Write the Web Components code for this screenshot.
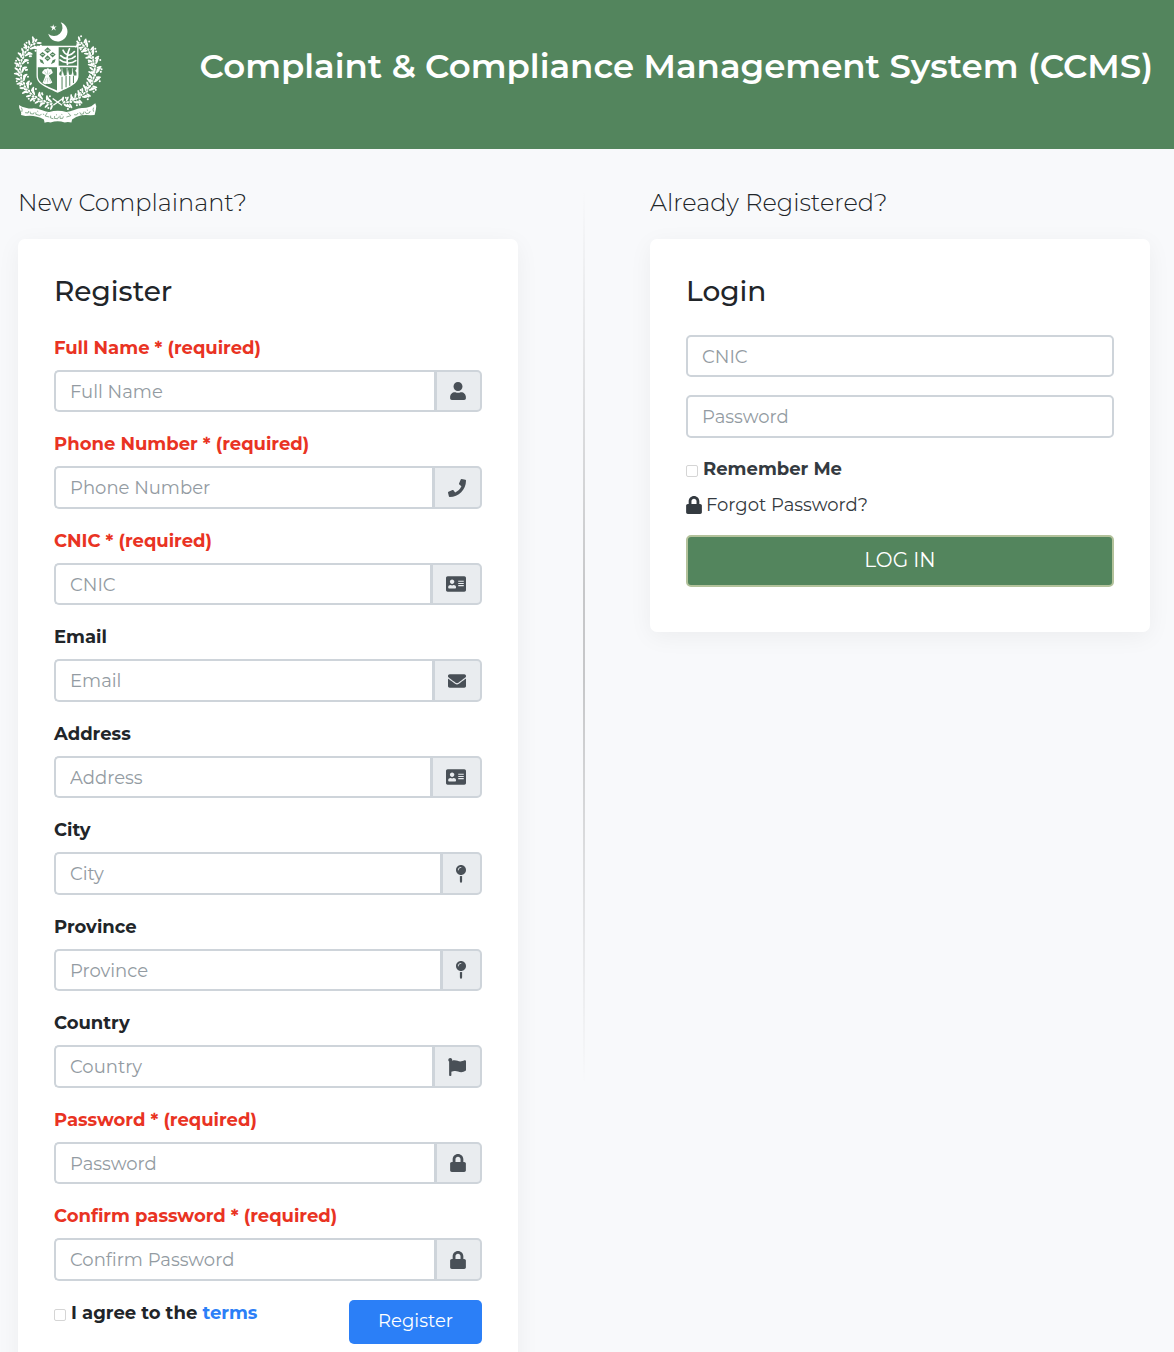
<!DOCTYPE html>
<html lang="en">
<head>
<meta charset="utf-8">
<meta name="viewport" content="width=device-width, initial-scale=1">
<title>Complaint &amp; Compliance Management System (CCMS)</title>
<style>
  :root {
    --green: #53855d;
    --ink: #212529;
    --soft-ink: #343a40;
    --line: #ced4da;
    --addon: #e9ecef;
    --hint: #939ba2;
    --blue: #2b7ff7;
    --red: #e93323;
    --font: Montserrat, Inter, "Open Sans", sans-serif;
  }
  body { margin: 0; background: #f8f9fb; color: var(--ink); font: 400 18px/1.5 var(--font); }
</style>
</head>
<body>
<ccms-page></ccms-page>

<script>
const define = (name, html, setup) => {
  const template = document.createElement('template');
  template.innerHTML = '<style>*{box-sizing:border-box}</style>' + html;
  customElements.define(name, class extends HTMLElement {
    connectedCallback() {
      if (this.shadowRoot) return;
      const root = this.attachShadow({ mode: 'open' });
      root.append(template.content.cloneNode(true));
      if (setup) setup(this, root);
    }
  });
};

/* glyph: [viewBox width, drawn width in px, path] */
const ICONS = {
  user: [448, 16, 'M224 256c70.7 0 128-57.3 128-128S294.7 0 224 0 96 57.3 96 128s57.3 128 128 128zm89.6 32h-16.7c-22.2 10.2-46.9 16-72.9 16s-50.6-5.8-72.9-16h-16.7C60.2 288 0 348.2 0 422.4V464c0 26.5 21.5 48 48 48h352c26.5 0 48-21.5 48-48v-41.6c0-74.2-60.2-134.4-134.4-134.4z'],
  phone: [512, 18, 'M493.4 24.6l-104-24c-11.3-2.6-22.9 3.3-27.5 13.9l-48 112c-4.2 9.8-1.4 21.3 6.9 28l60.6 49.6c-36 76.7-98.9 140.5-177.2 177.2l-49.6-60.6c-6.8-8.3-18.2-11.1-28-6.9l-112 48C3.9 366.5-2 378.1.6 389.4l24 104C27.1 504.2 36.7 512 48 512c256.1 0 464-207.5 464-464 0-11.2-7.7-20.9-18.6-23.4z'],
  card: [576, 20, 'M528 32H48C21.5 32 0 53.5 0 80v352c0 26.5 21.5 48 48 48h480c26.5 0 48-21.5 48-48V80c0-26.5-21.5-48-48-48zm-352 96c35.3 0 64 28.7 64 64s-28.7 64-64 64-64-28.7-64-64 28.7-64 64-64zm112 236.8c0 10.6-10 19.2-22.4 19.2H86.4C74 384 64 375.4 64 364.8v-19.2c0-31.8 30.1-57.6 67.2-57.6h5c12.3 5.1 25.7 8 39.8 8s27.6-2.9 39.8-8h5c37.1 0 67.2 25.8 67.2 57.6v19.2zM512 312c0 4.4-3.6 8-8 8H360c-4.4 0-8-3.6-8-8v-16c0-4.4 3.6-8 8-8h144c4.4 0 8 3.6 8 8v16zm0-64c0 4.4-3.6 8-8 8H360c-4.4 0-8-3.6-8-8v-16c0-4.4 3.6-8 8-8h144c4.4 0 8 3.6 8 8v16zm0-64c0 4.4-3.6 8-8 8H360c-4.4 0-8-3.6-8-8v-16c0-4.4 3.6-8 8-8h144c4.4 0 8 3.6 8 8v16z'],
  mail: [512, 18, 'M502.3 190.8c3.9-3.1 9.7-.2 9.7 4.7V400c0 26.5-21.5 48-48 48H48c-26.5 0-48-21.5-48-48V195.6c0-5 5.7-7.8 9.7-4.7 22.4 17.4 52.1 39.5 154.1 113.6 21.1 15.4 56.7 47.8 92.2 47.6 35.7.3 72-32.8 92.3-47.6 102-74.1 131.6-96.3 154-113.7zM256 320c23.2.4 56.6-29.2 73.4-41.4 132.7-96.3 142.8-104.7 173.4-128.7 5.8-4.5 9.2-11.5 9.2-18.9v-19c0-26.5-21.5-48-48-48H48c-26.5 0-48 21.5-48 48v19c0 7.4 3.4 14.3 9.2 18.9 30.6 23.9 40.7 32.4 173.4 128.7 16.8 12.2 50.2 41.8 73.4 41.4z'],
  pin: [288, 10, 'M112 316.94v156.69l22.02 33.02c4.75 7.12 15.22 7.12 19.97 0L176 473.63V316.94c-10.39 1.92-21.06 3.06-32 3.06s-21.61-1.14-32-3.06zM144 0C64.47 0 0 64.47 0 144s64.47 144 144 144 144-64.47 144-144S223.53 0 144 0zm0 76c-37.5 0-68 30.5-68 68 0 6.62-5.38 12-12 12s-12-5.38-12-12c0-50.73 41.28-92 92-92 6.62 0 12 5.38 12 12s-5.38 12-12 12z'],
  flag: [512, 18, 'M349.565 98.783C295.978 98.783 251.721 64 184.348 64c-24.955 0-47.309 4.384-68.045 12.013a55.947 55.947 0 0 0 3.586-23.562C118.117 24.015 94.806 1.206 66.338.048 34.345-1.254 8 24.296 8 56c0 19.026 9.497 35.825 24 45.945V488c0 13.255 10.745 24 24 24h16c13.255 0 24-10.745 24-24v-94.4c28.311-12.064 63.582-22.122 114.435-22.122 53.588 0 97.844 34.783 165.217 34.783 48.169 0 86.667-16.294 122.505-40.858C506.84 359.452 512 349.571 512 339.045v-243.1c0-23.393-24.269-38.87-45.485-29.016-34.338 15.948-76.454 31.854-116.95 31.854z'],
  lock: [448, 16, 'M400 224h-24v-72C376 68.2 307.8 0 224 0S72 68.2 72 152v72H48c-26.5 0-48 21.5-48 48v192c0 26.5 21.5 48 48 48h352c26.5 0 48-21.5 48-48V272c0-26.5-21.5-48-48-48zm-104 0H152v-72c0-39.7 32.3-72 72-72s72 32.3 72 72v72z']
};

define('ccms-icon', `
<style>:host{display:block;flex:none} svg{display:block;height:18px;fill:currentColor}</style>
<svg aria-hidden="true"><path/></svg>`, (el, root) => {
  const [box, width, d] = ICONS[el.getAttribute('name')];
  const svg = root.querySelector('svg');
  svg.setAttribute('viewBox', `0 0 ${box} 512`);
  svg.style.width = width + 'px';
  root.querySelector('path').setAttribute('d', d);
});

/* State emblem: crescent and star, quartered shield, wreath, ribbon. */
define('ccms-emblem', `
<style>:host{display:block;flex:none;width:90px} svg{display:block;width:100%}</style>
<svg viewBox="42 33 268 306" role="img" aria-label="State emblem of Pakistan">
  <g fill="#fff">
    <path d="M184 37A29 29 0 1 1 147 71A25.2 25.2 0 0 0 184 37Z"/>
    <path d="M162 43l2 7 8-1-6 5 4 7-7-4-6 5 2-8-7-4 8-1z"/>
    <path d="M112 107H237V196C237 224 201 233 175 247C149 233 112 224 112 196Z"/>
  </g>
  <g fill="var(--green)">
    <path d="M178 111H233V166H178Z"/>
    <path d="M116 171H173V240C149 228 116 221 116 196Z"/>
    <path d="M145 111l10 9-10 9-10-9zM130 125l9 8-9 9-9-9zM160 125l9 8-9 9-9-9zM145 135l9 9-9 9-9-9zM121 146l9 4 5 12-11-6zM169 146l-9 4-5 12 11-6z"/>
    <path d="M181 171h50v5l-4 5 4 5v9h-8l-3-14-4 12h-7l-3-15-5 17h-7l-4-14-4 15-6-2v-6l5-7z"/>
  </g>
  <g fill="none" stroke="var(--green)" stroke-width="3">
    <path d="M188 199v37M200 197v33M211 197v29M222 196v22"/>
  </g>
  <g fill="none" stroke="#fff" stroke-width="2">
    <path d="M139 120h12M126 133h8M156 133h8M141 144h8M188 174v20M203 173v18M219 174v18"/>
  </g>
  <g fill="none" stroke="#fff" stroke-width="5" stroke-linecap="round">
    <path d="M204 162Q201 135 210 116M203 156Q192 157 182 149M204 145Q193 145 184 136M205 133Q195 131 191 120M205 158Q218 159 229 151M206 147Q217 147 227 138M208 135Q218 133 225 124"/>
  </g>
  <g fill="#fff">
    <path d="M132 181q4-8 9-4 5-7 9 0 8-3 8 5 5 5-1 8l-8 5q0 4 3 7l7 14q-8 6-15 4-8 3-14-3l6-14 3-9-8-4q-5-5 1-9z"/>
  </g>
  <path d="M136 183l6 9M145 180v12M154 184l-6 8M141 202l-5 12M145 202v14M149 202l5 12" stroke="var(--green)" fill="none" stroke-width="1"/>
  <g id="wreath" fill="#fff"></g>
  <path d="M162 284L190 264M188 284L160 264" stroke="#fff" stroke-width="4" fill="none"/>
  <g fill="#fff">
    <path d="M60 283q8 7 20 8 14 4 22 2 9-1 27 6 15 6 21 5 25-7 51 0 11-1 23-6 16-7 26-6 22-1 30-9l7-5q5 8 2 18l-4 17-12 1q-25-4-43 5l-12 7-2 9q-11-3-20 0-21-7-42 0-9-3-18 1l-2-10q-26-14-55-10l-13-3q2-4-1-11-6-8-5-19z"/>
  </g>
  <g fill="none" stroke="var(--green)" stroke-width="2">
    <path d="M67 291q4 6 1 13M78 306l9 1 2-6M93 303l1 6 9 1 2-5M110 305v6l11 3 6-3M114 301l3 2M131 310l4 2"/>
    <path d="M154 315v7l8 2M166 316l-1 7 10 1 3-6M182 315v8h8l2-6M170 312l3 1M186 311l3 1"/>
    <path d="M224 312l7 1 5-6M241 305l3 6 8-2 1-6M257 303l3 6 9-2 3-6M282 291q-3 6 0 12M246 315l5-1M262 298l3 1"/>
    <path d="M144 306l-6 10 12 3M206 306l8 9-13 4"/>
  </g>
</svg>`, (el, root) => {
  let shapes = '';
  for (const side of [-1, 1]) {
    let stem = '';
    for (let i = 0; i <= 27; i++) {
      const a = (97 + i * 5) * Math.PI / 180;
      const px = 175 - side * Math.cos(a) * 111;
      const py = 178 + Math.sin(a) * 101;
      stem += (i ? 'L' : 'M') + px.toFixed(1) + ' ' + py.toFixed(1);
      /* direction of growth, from the knot at the bottom to the tip */
      const along = Math.atan2(Math.cos(a) * 101, side * Math.sin(a) * 111) * 180 / Math.PI;
      [[-58, 13], [52, 13], [-12, 7]].forEach(([turn, reach], k) => {
        const t = along + turn + (i % 3) * 20 - 16;
        const r = t * Math.PI / 180;
        const lx = (px + Math.cos(r) * reach).toFixed(1), ly = (py + Math.sin(r) * reach).toFixed(1);
        shapes += `<ellipse cx="${lx}" cy="${ly}" rx="${k === 2 ? 4 : 8}" ry="3" transform="rotate(${t.toFixed(0)} ${lx} ${ly})"/>`;
        if ((i + k) % 2 === 0 && k < 2) {
          shapes += `<circle cx="${(px + Math.cos(r + 0.4) * 20).toFixed(1)}" cy="${(py + Math.sin(r + 0.4) * 20).toFixed(1)}" r="3"/>`;
        }
      });
    }
    shapes += `<path d="${stem}" fill="none" stroke="#fff" stroke-width="2"/>`;
  }
  root.querySelector('#wreath').innerHTML = shapes;
});

define('ccms-header', `
<style>
  :host{display:flex;justify-content:space-between;align-items:flex-start;gap:24px;padding:21px 21px 25px 13px;background:var(--green);color:#fff}
  h1{margin:21px 0 0;font-size:34px;line-height:48px;font-weight:600;text-align:right}
  @media (max-width:800px){h1{font-size:24px;line-height:32px}}
</style>
<ccms-emblem></ccms-emblem>
<h1><slot></slot></h1>`);

define('ccms-section', `
<style>
  :host{display:block;min-width:0}
  h2{margin:0 0 20px;font-size:24px;line-height:32px;font-weight:300}
  .card{background:#fff;border-radius:7px;padding:36px 36px 45px;box-shadow:0 5px 23px rgba(0,0,0,.05)}
  h3{margin:0 0 28px;font-size:28px;line-height:32px;font-weight:500}
</style>
<h2><slot name="intro"></slot></h2>
<div class="card"><h3><slot name="title"></slot></h3><slot></slot></div>`);

define('ccms-divider', `
<style>
  :host{display:block;width:2px;height:896px;margin-top:2px;background:linear-gradient(rgba(0,0,0,0),rgba(0,0,0,.2) 45%,rgba(0,0,0,.2) 55%,rgba(0,0,0,0))}
  @media (max-width:800px){:host{display:none}}
</style>`);

define('ccms-field', `
<style>
  :host{display:block;margin-bottom:19px}
  :host([plain]){margin-bottom:18px}
  label{display:block;margin-bottom:8px;font-weight:700}
  :host([required]) label{color:var(--red)}
  .group{display:flex}
  input{flex:1;min-width:0;padding:9px 14px 7px;border:2px solid var(--line);border-radius:5px;background:#fff;color:var(--ink);font:400 18px/1.25 var(--font);outline:none}
  input::placeholder{color:var(--hint);opacity:1}
  input:focus{border-color:var(--blue)}
  .addon{display:flex;align-items:center;padding:0 14px 0 13px;border:2px solid var(--line);border-left-width:3px;border-radius:0 5px 5px 0;background:var(--addon);color:#495057}
  :host(:not([plain])) input{border-right:0;border-radius:5px 0 0 5px}
</style>
<label for="box"></label>
<div class="group"><input id="box"></div>`, (el, root) => {
  const input = root.querySelector('input');
  const label = el.getAttribute('label');
  input.type = el.getAttribute('type') || 'text';
  input.placeholder = el.getAttribute('hint') || label;
  if (el.hasAttribute('plain')) {
    root.querySelector('label').remove();
    input.setAttribute('aria-label', label);
  } else {
    root.querySelector('label').textContent = label + (el.hasAttribute('required') ? ' * (required)' : '');
    input.required = el.hasAttribute('required');
    const addon = document.createElement('span');
    addon.className = 'addon';
    addon.innerHTML = `<ccms-icon name="${el.getAttribute('icon')}"></ccms-icon>`;
    root.querySelector('.group').append(addon);
  }
});

define('ccms-check', `
<style>
  :host{display:flex;align-items:center;gap:5px;line-height:27px;font-weight:700}
  input{appearance:none;flex:none;width:12px;height:12px;margin:4px 0 0;border:1px solid #d5d5d5;border-radius:2px;background:#fff}
  input:checked{background:var(--blue)}
</style>
<input type="checkbox" id="box"><label for="box"><slot></slot></label>`);

define('ccms-button', `
<style>
  :host{display:block}
  button{display:block;width:100%;padding:0 29px;height:44px;border:0;border-radius:5px;background:var(--blue);color:#fff;font:400 18px/27px var(--font);cursor:pointer}
  :host([large]) button{height:52px;border:2px solid #b3c29b;background:var(--green);font-size:20px}
</style>
<button type="button"><slot></slot></button>`);

define('ccms-register', `
<style>
  :host{display:block}
  .foot{display:flex;justify-content:space-between;align-items:flex-start}
  a{color:var(--blue);text-decoration:none}
</style>
<ccms-section>
  <span slot="intro">New Complainant?</span>
  <span slot="title">Register</span>
  <ccms-field label="Full Name" icon="user" required></ccms-field>
  <ccms-field label="Phone Number" icon="phone" type="tel" required></ccms-field>
  <ccms-field label="CNIC" icon="card" required></ccms-field>
  <ccms-field label="Email" icon="mail" type="email"></ccms-field>
  <ccms-field label="Address" icon="card"></ccms-field>
  <ccms-field label="City" icon="pin"></ccms-field>
  <ccms-field label="Province" icon="pin"></ccms-field>
  <ccms-field label="Country" icon="flag"></ccms-field>
  <ccms-field label="Password" icon="lock" type="password" required></ccms-field>
  <ccms-field label="Confirm password" hint="Confirm Password" icon="lock" type="password" required></ccms-field>
  <div class="foot">
    <ccms-check>I agree to the <a href="#terms">terms</a></ccms-check>
    <ccms-button>Register</ccms-button>
  </div>
</ccms-section>`);

define('ccms-login', `
<style>
  :host{display:block}
  ccms-check,a{color:var(--soft-ink)}
  .links{display:flex;flex-direction:column;gap:9px;margin-bottom:16px}
  a{display:flex;align-items:center;gap:4px;line-height:27px;text-decoration:none}
</style>
<ccms-section>
  <span slot="intro">Already Registered?</span>
  <span slot="title">Login</span>
  <ccms-field label="CNIC" plain></ccms-field>
  <ccms-field label="Password" type="password" plain></ccms-field>
  <div class="links">
    <ccms-check>Remember Me</ccms-check>
    <a href="#forgot"><ccms-icon name="lock"></ccms-icon>Forgot Password?</a>
  </div>
  <ccms-button large>LOG IN</ccms-button>
</ccms-section>`);

define('ccms-page', `
<style>
  :host{display:block}
  main{display:grid;grid-template-columns:minmax(0,1fr) auto minmax(0,1fr);column-gap:65px;align-items:start;padding:38px 24px 36px 18px}
  @media (max-width:800px){main{grid-template-columns:minmax(0,1fr);row-gap:36px}}
</style>
<ccms-header>Complaint &amp; Compliance Management System (CCMS)</ccms-header>
<main>
  <ccms-register></ccms-register>
  <ccms-divider></ccms-divider>
  <ccms-login></ccms-login>
</main>`);
</script>
</body>
</html>
